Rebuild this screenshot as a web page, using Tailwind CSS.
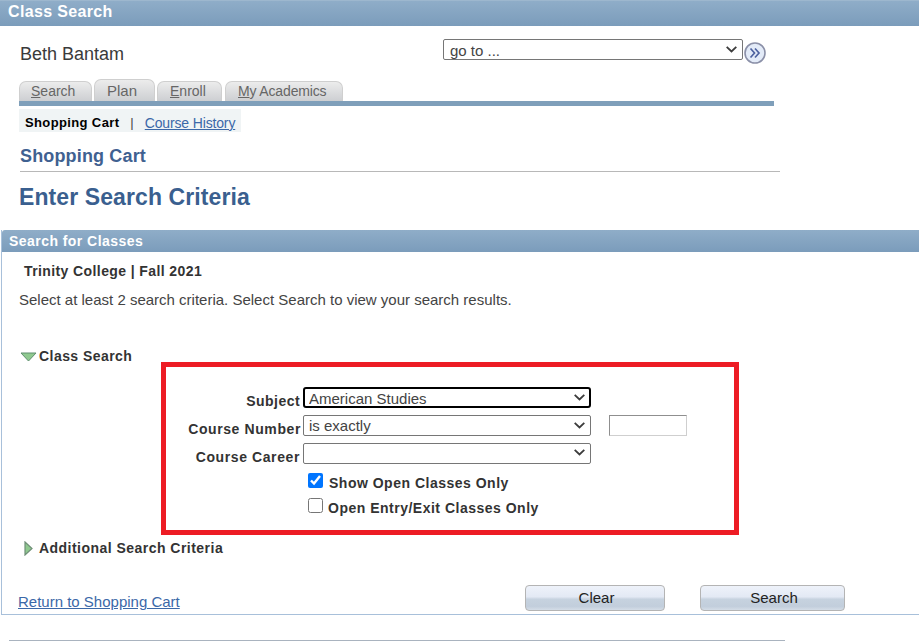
<!DOCTYPE html>
<html lang="en">
<head>
<meta charset="utf-8">
<title>Class Search</title>
<script src="https://cdn.jsdelivr.net/npm/@tailwindcss/browser@4"></script>
</head>
<body class="bg-white overflow-hidden font-['Liberation_Sans',Arial,sans-serif] text-[#333]">
<div class="relative w-[919px] h-[642px] overflow-hidden">
  <header class="h-[26px] pl-2 bg-gradient-to-b from-[#8fadc8] to-[#7b9cbb] border-t border-[#9db7ce] text-white font-bold text-[16px] leading-[21px] tracking-[0.35px]">Class Search</header>

  <div class="h-[54px] pl-5 flex items-start">
    <div class="w-[423px] pt-[17px] text-[18px] leading-[22px] text-[#3a3a3a]">Beth Bantam</div>
    <div class="relative mt-[13px] w-[300px] h-[21px]">
      <select class="block appearance-none w-full h-full border border-[#767676] rounded-[2px] bg-white pl-[6px] text-[15px] text-[#444]"><option>go to ...</option></select>
      <svg class="absolute right-[6px] top-[7px] pointer-events-none" width="11" height="7" viewBox="0 0 11 7" fill="none"><path d="M0.7 0.8 L5.5 5.5 L10.3 0.8" stroke="#3c3c3c" stroke-width="1.8"/></svg>
    </div>
    <svg class="mt-[16px] ml-[1px]" width="22" height="22" viewBox="0 0 22 22" fill="none">
      <circle cx="11" cy="11" r="10" fill="#e3ebf8" stroke="#8b90a8" stroke-width="1.6"/>
      <path d="M6.5 6.5 L10.5 11 L6.5 15.5 M11 6.5 L15 11 L11 15.5" stroke="#4d62a0" stroke-width="1.7"/>
    </svg>
  </div>

  <nav class="ml-[19px] w-[755px] h-[26px] flex items-end border-b-[5px] border-[#7f9fba] text-[14px] leading-[19px] text-[#666]">
    <a class="h-[20px] w-[73px] pl-[11px] rounded-t-[7px] border border-b-0 border-[#cfcfcf] bg-gradient-to-b from-[#ececec] to-[#cdcfd2]"><u>S</u>earch</a>
    <a class="ml-[2px] h-[22px] w-[61px] pl-3 pt-[1px] rounded-t-[7px] border border-b-0 border-[#cfcfcf] bg-gradient-to-b from-[#ececec] to-[#cdcfd2] text-[15px]">Plan</a>
    <a class="ml-[2px] h-[20px] w-[65px] pl-3 rounded-t-[7px] border border-b-0 border-[#cfcfcf] bg-gradient-to-b from-[#ececec] to-[#cdcfd2]"><u>E</u>nroll</a>
    <a class="ml-[3px] h-[20px] w-[118px] pl-3 rounded-t-[7px] border border-b-0 border-[#cfcfcf] bg-gradient-to-b from-[#ececec] to-[#cdcfd2] tracking-[-0.15px]"><u>M</u>y Academics</a>
  </nav>

  <div class="ml-[19px] mt-[3px] w-[222px] h-[23px] pl-[6px] pt-[5px] flex items-center bg-[#f0f4f5] text-[13px]">
    <b class="text-black font-bold tracking-[0.37px]">Shopping Cart</b>
    <span class="ml-[11px] text-[#444]">|</span>
    <a class="ml-[11px] text-[14px] text-[#3b68a8] underline tracking-[-0.15px]">Course History</a>
  </div>

  <h2 class="ml-5 mt-[12px] h-[27px] text-[18px] leading-[24px] font-bold text-[#3f6191] tracking-[0.15px]">Shopping Cart</h2>
  <div class="ml-5 w-[760px] h-px bg-[#b8b8b8]"></div>
  <h1 class="ml-[19px] mt-[11px] h-[47px] text-[23px] leading-[28px] font-bold text-[#3a5f8f] tracking-[0.1px]">Enter Search Criteria</h1>

  <section class="ml-[1px] h-[385px] border-l border-b border-[#a8c0da]">
    <div class="h-[22px] pl-[7px] bg-gradient-to-b from-[#8fadc8] to-[#7b9cbb] rounded-tl-[3px] text-white font-bold text-[14px] leading-[22px] tracking-[0.45px]">Search for Classes</div>
    <div class="pl-[22px] pt-[11px] h-[37px] text-[14px] leading-[17px] font-bold text-[#333] tracking-[0.4px]">Trinity College | Fall 2021</div>
    <p class="pl-[17px] pt-[1px] h-[52px] text-[15px] leading-[19px] text-[#444]">Select at least 2 search criteria. Select Search to view your search results.</p>

    <div class="pl-[18px] h-[31px] flex items-center gap-[2px] text-[14px] font-bold text-[#333] tracking-[0.45px]">
      <svg width="17" height="10" viewBox="0 0 17 10"><path d="M1 1 H16 L8.5 9 Z" fill="#8fc98f" stroke="#5f8f6f" stroke-width="1"/></svg>
      <span>Class Search</span>
    </div>

    <div class="mt-[15px] mb-[7px] grid grid-cols-[301px_288px_18px_78px] grid-rows-[21px_21px_21px] gap-y-[7px] items-start text-[14px] leading-[19px] font-bold text-[#333] tracking-[0.45px]">
      <label class="h-[21px] text-right pr-[3px] pt-[5px]">Subject</label>
      <div class="relative h-[21px]">
        <select class="block appearance-none w-full h-full border-2 border-black rounded-[3px] bg-white pl-[4px] text-[15px] font-normal text-[#444] tracking-normal"><option>American Studies</option></select>
        <svg class="absolute right-[6px] top-[7px] pointer-events-none" width="11" height="7" viewBox="0 0 11 7" fill="none"><path d="M0.7 0.8 L5.5 5.5 L10.3 0.8" stroke="#3c3c3c" stroke-width="1.8"/></svg>
      </div>
      <span></span><span></span>
      <label class="h-[21px] text-right pr-[2px] pt-[5px] whitespace-nowrap tracking-[0.6px]">Course Number</label>
      <div class="relative h-[21px]">
        <select class="block appearance-none w-full h-full border border-[#767676] rounded-[2px] bg-white pl-[5px] text-[15px] font-normal text-[#444] tracking-normal"><option>is exactly</option></select>
        <svg class="absolute right-[6px] top-[7px] pointer-events-none" width="11" height="7" viewBox="0 0 11 7" fill="none"><path d="M0.7 0.8 L5.5 5.5 L10.3 0.8" stroke="#3c3c3c" stroke-width="1.8"/></svg>
      </div>
      <span></span>
      <input type="text" class="h-[21px] w-[78px] border border-t-[#8f8f8f] border-l-[#8f8f8f] border-r-[#cfcfcf] border-b-[#cfcfcf] bg-white">
      <label class="h-[21px] text-right pr-[3px] pt-[5px] tracking-[0.6px]">Course Career</label>
      <div class="relative h-[21px]">
        <select class="block appearance-none w-full h-full border border-[#767676] rounded-[2px] bg-white text-[15px] font-normal"><option></option></select>
        <svg class="absolute right-[6px] top-[6px] pointer-events-none" width="11" height="7" viewBox="0 0 11 7" fill="none"><path d="M0.7 0.8 L5.5 5.5 L10.3 0.8" stroke="#3c3c3c" stroke-width="1.8"/></svg>
      </div>
      <span></span><span></span>
    </div>

    <div class="pl-[306px] h-[25px] flex items-center gap-[6px] text-[14px] font-bold text-[#333] tracking-[0.5px]">
      <input type="checkbox" checked class="w-[15px] h-[15px] accent-[#0075ff] m-0 -translate-y-[3px]"><span>Show Open Classes Only</span>
    </div>
    <div class="pl-[306px] h-[25px] flex items-center gap-[5px] text-[14px] font-bold text-[#333] tracking-[0.5px]">
      <input type="checkbox" class="w-[15px] h-[15px] m-0 -translate-y-[3px]"><span>Open Entry/Exit Classes Only</span>
    </div>

    <div class="pl-[22px] mt-[17px] h-[20px] flex items-center gap-[6px] text-[14px] font-bold text-[#333] tracking-[0.47px]">
      <svg width="9" height="15" viewBox="0 0 9 15"><path d="M1 1 L8 7.5 L1 14 Z" fill="#8fc98f" stroke="#6f8f77" stroke-width="1.2"/></svg>
      <span>Additional Search Criteria</span>
    </div>

    <div class="mt-[27px] pl-[16px] flex items-start">
      <a class="w-[507px] pt-[8px] text-[15px] leading-[18px] text-[#3b68a8] underline">Return to Shopping Cart</a>
      <button class="w-[140px] h-[26px] pl-[3px] rounded-[4px] border border-[#b4b4b4] bg-[linear-gradient(180deg,#eef2fa_0%,#e3e9f4_45%,#c6d2df_55%,#c2cedc_85%,#d4dde7_100%)] text-[15px] text-[#222]">Clear</button>
      <button class="ml-[35px] w-[145px] h-[26px] pl-[3px] rounded-[4px] border border-[#b4b4b4] bg-[linear-gradient(180deg,#eef2fa_0%,#e3e9f4_45%,#c6d2df_55%,#c2cedc_85%,#d4dde7_100%)] text-[15px] text-[#222]">Search</button>
    </div>
  </section>

  <div class="absolute left-[161px] top-[362px] w-[578px] h-[173px] border-[5px] border-[#ed1c24]"></div>
  <div class="absolute left-[9px] top-[640px] w-[776px] h-[1px] bg-[#a9b3bf]"></div>
</div>
</body>
</html>
